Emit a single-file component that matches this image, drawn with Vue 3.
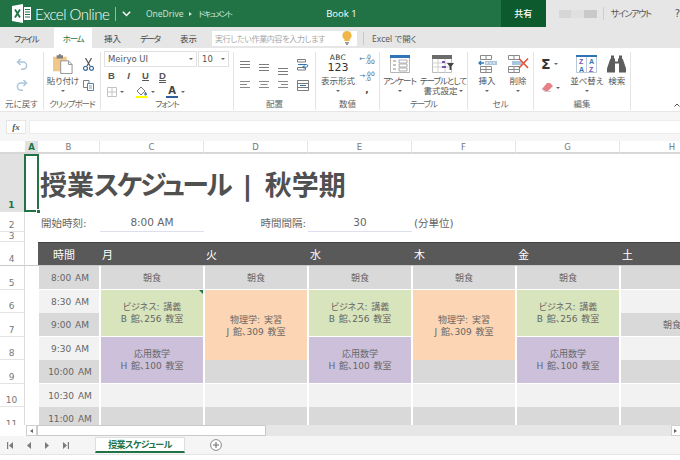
<script setup>
const days = ['月', '火', '水', '木', '金', '土'];
const columns = ['B', 'C', 'D', 'E', 'F', 'G'];

const biz = { text: ['ビジネス: 講義', 'B 館、256 教室'], cls: 'green span2' };
const math = { text: ['応用数学', 'H 館、100 教室'], cls: 'purple span2' };
const lab = { text: ['物理学: 実習', 'J 館、309 教室'], cls: 'peach span4' };
const blank = { text: [], cls: 'pale open' };
const dark = { text: [], cls: 'grey' };
const darkOpen = { text: [], cls: 'grey open' };
const meal = { text: ['朝食'], cls: 'grey' };

const rows = [
    { n: 5, time: '8:00 AM', timeCls: 'grey', cells: [meal, meal, meal, meal, meal, dark] },
    { n: 6, time: '8:30 AM', timeCls: 'pale open', cells: [biz, lab, biz, lab, biz, blank] },
    { n: 7, time: '9:00 AM', timeCls: 'grey', cells: [meal] },
    { n: 8, time: '9:30 AM', timeCls: 'pale open', cells: [math, math, math, blank] },
    { n: 9, time: '10:00 AM', timeCls: 'grey', cells: [dark] },
    { n: 10, time: '10:30 AM', timeCls: 'pale open', cells: [blank, blank, blank, blank, blank, blank] },
    { n: 11, time: '11:00 AM', timeCls: 'grey open', cells: [darkOpen, darkOpen, darkOpen, darkOpen, darkOpen, darkOpen] },
];

const vAligns = ['v1', 'v2', 'v3'];
const hAligns = [
    [[0, 10], [0, 7], [0, 10]],
    [[0, 10], [1.5, 7], [0, 10]],
    [[0, 10], [3, 7], [0, 10]],
];
</script>

<template>
    <div class="app">
        <header class="topbar">
            <div class="brand">
                <svg class="logo" width="20" height="19" viewBox="0 0 20 19">
                    <path d="M0 2 11 0v19L0 17z" fill="#fff" />
                    <path d="M12 3h7v13h-7z" fill="#fff" />
                    <path d="M13 5.500h5M13 8h5M13 10.500h5M13 13h5" stroke="#217346" stroke-width="1" />
                    <path d="M3 5.500 8 13.500M8 5.500 3 13.500" stroke="#217346" stroke-width="1.800" />
                </svg>
                <span class="product">Excel Online</span>
                <i class="bar-sep"></i>
                <svg width="9" height="6" viewBox="0 0 9 6"><path d="M.8.8 4.500 4.500 8.200.8" fill="none" stroke="#fff" stroke-width="1.500" /></svg>
                <span class="crumb first">OneDrive</span>
                <span class="crumb-arrow"></span>
                <span class="crumb kana">ドキュメント</span>
                <span class="book">Book 1</span>
                <span class="share">共有</span>
            </div>
            <div class="account">
                <span class="blur-name"><i></i><i></i><i></i></span>
                <i class="acc-sep"></i>
                <span class="signout kana">サインアウト</span>
                <span class="help">?</span>
            </div>
        </header>

        <nav class="tabs">
            <span class="tab t-file kana">ファイル</span>
            <span class="tab t-home kana">ホーム</span>
            <span class="tab t-ins">挿入</span>
            <span class="tab t-data kana">データ</span>
            <span class="tab t-view">表示</span>
            <div class="tell">
                <span>実行したい作業内容を入力します</span>
                <svg width="10" height="14" viewBox="0 0 10 14">
                    <path d="M5 0a4.600 4.600 0 0 0-2.600 8.400V10h5.200V8.400A4.600 4.600 0 0 0 5 0z" fill="#f0b64a" />
                    <path d="M3 11h4v1.400H3zM4 12.600h2V14H4z" fill="#9a9a9a" />
                </svg>
            </div>
            <i class="tab-sep"></i>
            <span class="tab open-in">Excel で開く</span>
        </nav>

        <section class="ribbon">
            <div class="group g-undo">
                <div class="body stack">
                    <svg width="12" height="12" viewBox="0 0 12 12"><path d="M4.500 1 1.500 4l3 3M2 4h5a3.600 3.600 0 0 1 0 7.200H5" fill="none" stroke="#a9c6dd" stroke-width="1.500" /></svg>
                    <svg width="12" height="12" viewBox="0 0 12 12"><path d="M7.500 1l3 3-3 3M10 4H5a3.600 3.600 0 0 0 0 7.200h2" fill="none" stroke="#a9c6dd" stroke-width="1.500" /></svg>
                </div>
                <div class="label">元に戻す</div>
            </div>

            <div class="group g-clip">
                <div class="body">
                    <div class="big w-paste">
                        <svg width="22" height="20" viewBox="0 0 22 22">
                            <path d="M0 3h15v16H0z" fill="#f0c98a" />
                            <path d="M4 1.500h2.500V0h2v1.500H11V5H4z" fill="#7f7f7f" />
                            <path d="M8.500 7.500H17l4 4v10H8.500z" fill="#fff" stroke="#8c8c8c" />
                            <path d="M17 7.500v4h4" fill="none" stroke="#8c8c8c" />
                        </svg>
                        <span class="cap">貼り付け</span>
                        <i class="caret"></i>
                    </div>
                    <div class="small-col">
                        <svg width="11" height="13" viewBox="0 0 11 13">
                            <path d="M2.500 0 7 8M8.500 0 4 8" stroke="#555" stroke-width="1.200" />
                            <circle cx="2.500" cy="10.300" r="2" fill="none" stroke="#3e6f9e" stroke-width="1.200" />
                            <circle cx="8.500" cy="10.300" r="2" fill="none" stroke="#3e6f9e" stroke-width="1.200" />
                        </svg>
                        <svg width="11" height="11" viewBox="0 0 11 11">
                            <path d="M.5.500h5.500v7H.5z" fill="#fff" stroke="#7f7f7f" />
                            <path d="M4.500 3.500h6v7h-6z" fill="#fff" stroke="#5a7fa3" />
                            <path d="M6 6h3M6 8h3" stroke="#5a7fa3" stroke-width=".8" />
                        </svg>
                    </div>
                </div>
                <div class="label kana-s">クリップボード</div>
            </div>

            <div class="group g-font">
                <div class="body col">
                    <div class="font-row">
                        <div class="combo c-name"><span>Meiryo UI</span><i class="caret"></i></div>
                        <div class="combo c-size"><span>10</span><i class="caret"></i></div>
                    </div>
                    <div class="style-row">
                        <b class="st">B</b>
                        <i class="st">I</i>
                        <u class="st">U</u>
                        <span class="st dbl">D</span>
                    </div>
                    <div class="fill-row">
                        <span class="tool">
                            <svg width="10" height="10" viewBox="0 0 10 10"><path d="M.5.500h9v9h-9zM5 .5v9M.5 5h9" fill="none" stroke="#c4c4c4" /></svg>
                            <i class="caret"></i>
                        </span>
                        <span class="tool">
                            <svg width="13" height="12" viewBox="0 0 13 12">
                                <path d="M2 5 6 1l4 4-4 4z" fill="#fff" stroke="#777" />
                                <path d="M10.500 5.500c1 1.400 1.500 2 1.500 2.700a1.400 1.400 0 0 1-2.800 0c0-.7.500-1.300 1.300-2.700z" fill="#4c7fb5" />
                                <path d="M1 10h11v2H1z" fill="#ffff00" />
                            </svg>
                            <i class="caret"></i>
                        </span>
                        <span class="tool">
                            <span class="font-color">A</span>
                            <i class="caret"></i>
                        </span>
                    </div>
                </div>
                <div class="label kana-s">フォント</div>
            </div>

            <div class="group g-align">
                <div class="body align-grid">
                    <svg v-for="a in vAligns" :key="a" :class="a" width="10" height="7" viewBox="0 0 10 7">
                        <path d="M0 .5h10M0 3.500h10M0 6.500h10" stroke="#7b7b7b" />
                    </svg>
                    <svg width="12" height="12" viewBox="0 0 12 12">
                        <path d="M.5.500h8v2.500h-8zM.5 8.500h8V11h-8z" fill="#fff" stroke="#7b7b7b" />
                        <path d="M1 5.500h8.500a1.200 1.200 0 0 1 0 2.500H6" fill="none" stroke="#2f75b5" />
                        <path d="M7.500 6.500 5.500 8l2 1.500" fill="none" stroke="#2f75b5" />
                    </svg>
                    <svg v-for="(a, k) in hAligns" :key="k" width="10" height="8" viewBox="0 0 10 8">
                        <path v-for="(l, i) in a" :key="i" :d="`M${l[0]} ${i * 3 + .5}h${l[1]}`" stroke="#8a8a8a" />
                    </svg>
                    <svg class="merge" width="12" height="11" viewBox="0 0 12 11">
                        <path d="M.5.500h11v10H.5zM.5 3.500h11M.5 7.500h11" fill="none" stroke="#7b7b7b" />
                        <path d="M3 5.500h6" stroke="#2f75b5" />
                    </svg>
                </div>
                <div class="label">配置</div>
            </div>

            <div class="group g-num">
                <div class="body">
                    <div class="big w-numfmt">
                        <span class="abc"><span>ABC</span><span class="n123">123</span></span>
                        <span class="cap">表示形式</span>
                        <i class="caret"></i>
                    </div>
                    <div class="dec-col">
                        <span class="dec"><span class="arrow-l">←</span><span class="dec-txt">.0<br>.00</span></span>
                        <span class="dec"><span class="arrow-r">→</span><span class="dec-txt">.00<br>.0</span></span>
                        <b class="comma">,</b>
                    </div>
                </div>
                <div class="label">数値</div>
            </div>

            <div class="group g-table">
                <div class="body">
                    <div class="big w-survey">
                        <svg width="20" height="18" viewBox="0 0 20 18">
                            <path d="M.5.500h19v17H.5z" fill="#fff" stroke="#b5b5b5" />
                            <path d="M0 0h20v3H0z" fill="#2f75b5" />
                            <path d="M3 6h3M3 10h3M3 14h3" stroke="#8a8a8a" />
                            <path d="M9 5h8v3H9zM9 9h8v3H9zM9 13h8v3H9z" fill="#fff" stroke="#9a9a9a" stroke-width=".8" />
                        </svg>
                        <span class="cap kana-s">アンケート</span>
                        <i class="caret"></i>
                    </div>
                    <div class="big w-format">
                        <svg width="22" height="18" viewBox="0 0 22 18">
                            <path d="M.5.500h19v17H.5z" fill="#fff" stroke="#bdbdbd" />
                            <path d="M0 0h20v4H0z" fill="#6b6b6b" />
                            <path d="M0 8h20M0 12h20M6 4v14M13 4v14" stroke="#cfcfcf" />
                            <path d="M10 7h3M10 12h4" stroke="#7b4fb0" stroke-width="1.800" />
                            <path d="M15 8h7l-2.600 3.500V15h-1.800v-3.500z" fill="#444" />
                        </svg>
                        <span class="cap two"><span class="kana-s">テーブルとして</span><br>書式設定<i class="caret inline"></i></span>
                    </div>
                </div>
                <div class="label kana-s">テーブル</div>
            </div>

            <div class="group g-cells">
                <div class="body">
                    <div class="big w-cell">
                        <svg width="19" height="18" viewBox="0 0 19 18">
                            <path d="M2.500.500h11v4h-11zM2.500 11.500h11v6h-11zM8 .5v4M8 11.500v6M2.500 14.500h11" fill="none" stroke="#8a8a8a" />
                            <path d="M1 8h5M3 6 1 8l2 2" fill="none" stroke="#2f75b5" stroke-width="1.300" />
                            <path d="M7 6h12v4H7z" fill="#a9c6dd" />
                            <path d="M8 8h2M11.500 8h2M15 8h2" stroke="#fff" />
                        </svg>
                        <span class="cap">挿入</span>
                        <i class="caret"></i>
                    </div>
                    <div class="big w-cell">
                        <svg width="21" height="18" viewBox="0 0 21 18">
                            <path d="M.5.500h11v4H.5zM.5 11.500h11v6H.5zM6 .5v4M6 11.500v6M.5 14.500h11" fill="none" stroke="#8a8a8a" />
                            <path d="M4 6h10v4H4z" fill="#a9c6dd" />
                            <path d="M11 3.500 20 13M20 3.500 11 13" stroke="#e2543a" stroke-width="1.600" />
                        </svg>
                        <span class="cap">削除</span>
                        <i class="caret"></i>
                    </div>
                </div>
                <div class="label">セル</div>
            </div>

            <div class="group g-edit">
                <div class="body">
                    <div class="edit-col">
                        <span class="tool"><span class="sigma">Σ</span><i class="caret"></i></span>
                        <span class="tool">
                            <svg width="12" height="9" viewBox="0 0 12 9">
                                <path d="M6 0h3l3 3-5 5H4L1 6z" fill="#e8808a" />
                                <path d="M1 6l3 2.500h6" fill="none" stroke="#c9c9c9" />
                            </svg>
                            <i class="caret"></i>
                        </span>
                    </div>
                    <div class="big w-sort">
                        <svg width="21" height="18" viewBox="0 0 21 18">
                            <path d="M.5.500h20v17H.5zM10.500 2v16" fill="#fff" stroke="#b9c9d8" />
                            <path d="M0 0h21v2H0z" fill="#2f75b5" />
                            <text x="3" y="9" class="az pu">Z</text>
                            <text x="3" y="16.500" class="az bl">A</text>
                            <text x="13" y="9" class="az bl">A</text>
                            <text x="13" y="16.500" class="az pu">Z</text>
                        </svg>
                        <span class="cap">並べ替え</span>
                        <i class="caret"></i>
                    </div>
                    <div class="big w-find">
                        <svg width="19" height="17" viewBox="0 0 19 17">
                            <path d="M4 0h3v3h1v3h3V3h1V0h3v3l1 1 3 9v4h-7V8H8v9H0v-4l3-9 1-1z" fill="#5c5c5c" />
                        </svg>
                        <span class="cap">検索</span>
                    </div>
                </div>
                <div class="label">編集</div>
            </div>

            <svg class="collapse" width="6" height="4" viewBox="0 0 6 4"><path d="M.5 3.500 3 1l2.500 2.500" fill="none" stroke="#555" /></svg>
        </section>

        <div class="formula">
            <span class="fx">fx</span>
            <div class="fx-input"></div>
        </div>

        <main class="sheet">
            <div class="corner"></div>
            <div class="colhead sel">A</div>
            <div v-for="c in [...columns, 'H']" :key="c" class="colhead" :class="{ last: c === 'H' }">{{ c }}</div>

            <div class="rowhead sel">1</div>
            <div class="a1"></div>
            <div class="title-cell">授業<span class="title-kana">スケジュール</span> | 秋学期</div>

            <div class="rowhead">2</div>
            <div></div>
            <div class="param">開始時刻:</div>
            <div class="param value">8:00 AM</div>
            <div class="param right">時間間隔:</div>
            <div class="param value">30</div>
            <div class="param unit">(分単位)</div>

            <div class="rowhead r3">3</div>
            <div class="fullrow"></div>

            <div class="rowhead froze">4</div>
            <div class="froze"></div>
            <div class="dayhead center froze">時間</div>
            <div v-for="d in days" :key="d" class="dayhead froze">{{ d }}</div>

            <template v-for="r in rows" :key="r.n">
                <div class="rowhead">{{ r.n }}</div>
                <div></div>
                <div class="cell time" :class="r.timeCls">{{ r.time }}</div>
                <div v-for="(c, i) in r.cells" :key="i" class="cell" :class="c.cls">
                    <span v-for="t in c.text" :key="t">{{ t }}</span>
                    <i v-if="r.n === 6 && i === 0" class="note"></i>
                </div>
            </template>
        </main>

        <div class="hscroll">
            <span class="sb-btn left"><i></i></span>
            <span class="sb-thumb"></span>
            <span class="sb-track"></span>
            <span class="sb-btn right"><i></i></span>
        </div>

        <div class="sheet-tabs">
            <div class="nav-btns">
                <svg width="6" height="7" viewBox="0 0 6 7"><path d="M0 0h1.200v7H0zM6 0v7L2 3.500z" fill="#7b7b7b" /></svg>
                <svg width="4" height="7" viewBox="0 0 4 7"><path d="M4 0v7L0 3.500z" fill="#7b7b7b" /></svg>
                <svg width="4" height="7" viewBox="0 0 4 7"><path d="M0 0v7l4-3.500z" fill="#7b7b7b" /></svg>
                <svg width="6" height="7" viewBox="0 0 6 7"><path d="M0 0v7l4-3.500zM4.800 0H6v7H4.800z" fill="#7b7b7b" /></svg>
            </div>
            <div class="sheet-tab"><span>授業スケジュール</span></div>
            <svg class="add" width="12" height="12" viewBox="0 0 12 12">
                <circle cx="6" cy="6" r="5.400" fill="#fff" stroke="#8a8a8a" />
                <path d="M6 3v6M3 6h6" stroke="#666" />
            </svg>
        </div>

        <footer class="status"></footer>
    </div>
</template>

<style scoped>
.app{width:680px;height:460px;overflow:hidden;display:flex;flex-direction:column;background:#fff;color:#444;font-family:"DejaVu Sans","Noto Sans CJK JP",sans-serif;font-size:9px;font-feature-settings:"palt"}
.kana{letter-spacing:-1.300px}
.kana-s{letter-spacing:-1px}

.topbar{height:28px;flex:none;display:flex;background:#e6e6e6}
.brand{width:548px;height:27px;display:flex;align-items:center;background:#217346;color:#fff;padding-left:12px;box-sizing:border-box}
.logo{margin-right:3px;flex:none}
.product{font-family:Lato,"Open Sans",sans-serif;font-weight:300;font-size:15px;letter-spacing:-.5px;width:80px;white-space:nowrap}
.bar-sep{width:1px;height:14px;background:#8fbaa3;margin-right:6px}
.crumb{font-family:"Open Sans","Noto Sans CJK JP",sans-serif;font-size:8.500px;color:#cfe6d9;white-space:nowrap}
.crumb.first{margin-left:15px}
.crumb-arrow{margin:0 6px;width:0;height:0;border-left:3px solid #cfe6d9;border-top:2.500px solid transparent;border-bottom:2.500px solid transparent}
.crumb.kana{font-size:8px}
.book{font-family:"Open Sans",sans-serif;font-size:9.500px;margin-left:auto;margin-right:144px}
.share{width:45px;height:100%;display:flex;align-items:center;justify-content:center;background:#0c5a2e;font-size:9px;font-weight:500}
.account{flex:1;display:flex;align-items:center;height:27px;padding-left:13px;color:#555;font-size:9px}
.blur-name{display:flex;width:38px;height:8px}
.blur-name i{background:#d6d6d6;flex:1}
.blur-name i:nth-child(2){background:#e0e0e0}
.blur-name i:nth-child(3){background:#c9c9c9}
.acc-sep{width:1px;height:13px;background:#cfcfcf;margin:0 7px 0 6px}
.signout{width:64px;white-space:nowrap}
.help{font-size:10px}

.tabs{height:20px;flex:none;display:flex;align-items:center;background:#e6e6e6;font-size:8.500px;color:#444}
.tab{white-space:nowrap}
.t-file{margin-left:14px;width:40px}
.t-home{width:38px;height:100%;background:#fff;color:#217346;display:flex;align-items:center;justify-content:center}
.t-ins{margin-left:12px;width:36px}
.t-data{width:40px}
.t-view{width:32px}
.tell{width:145px;height:15px;background:#fff;display:flex;align-items:center;justify-content:space-between;padding:0 5px 0 3px;box-sizing:border-box;color:#a6a6a6;font-size:8px;letter-spacing:-.3px}
.tab-sep{width:1px;height:13px;background:#c8c8c8;margin:0 8px 0 6px}
.open-in{color:#555;font-family:"Open Sans","Noto Sans CJK JP",sans-serif;font-size:8.500px}

.ribbon{position:relative;height:64px;flex:none;display:flex;box-sizing:border-box;padding:4px 0 2px;background:#fff;border-bottom:1px solid #e6e6e6}
.group{display:flex;flex-direction:column;border-right:1px solid #e4e4e4;box-sizing:border-box;height:58px}
.body{height:47px;display:flex}
.label{height:11px;line-height:11px;text-align:center;font-size:8.500px;color:#666;white-space:nowrap}
.g-undo{width:44px}
.g-clip{width:57px}
.g-font{width:133px}
.g-align{width:82px}
.g-num{width:64px}
.g-table{width:88px}
.g-cells{width:66px}
.g-edit{width:97px}
.stack{flex-direction:column;align-items:center;gap:9px;padding-top:6px;box-sizing:border-box}
.col{flex-direction:column}
.big{display:flex;flex-direction:column;align-items:center;padding-top:2px;box-sizing:border-box}
.big svg{height:20px}
.cap{font-size:8.500px;line-height:10px;color:#555;margin-top:2px;white-space:nowrap;text-align:center}
.big > .caret{margin-top:4px}
.caret{display:inline-block;width:0;height:0;border-top:2.500px solid #666;border-left:2.500px solid transparent;border-right:2.500px solid transparent}
.caret.inline{margin-left:1px;vertical-align:2px}
.w-paste{width:38px}
.small-col{display:flex;flex-direction:column;gap:9px;padding-top:6px;align-items:center;width:12px}
.font-row{display:flex;gap:1px;margin:-1px 0 0 3px}
.combo{height:16px;display:flex;align-items:center;justify-content:space-between;padding:0 3px;border:1px solid #e1e1e1;box-sizing:border-box;color:#555;font-size:8.500px}
.c-name{width:93px}
.c-size{width:31px}
.style-row{display:flex;padding-left:2px;height:14px;align-items:center;margin-top:1px}
.st{width:17px;text-align:center;font-size:9.500px;font-weight:700;color:#555;font-style:normal;font-family:"Liberation Sans",sans-serif}
i.st{font-style:italic}
.dbl{text-decoration:underline double}
.fill-row{display:flex;padding:4px 0 0 6px;gap:11px;align-items:center}
.tool{display:flex;align-items:center;gap:3px}
.font-color{width:12px;border-bottom:2px solid #2f5f9e;text-align:center;font-size:10px;line-height:10px;font-weight:700;color:#444}
.align-grid{display:grid;grid-template-columns:repeat(4,19px);grid-template-rows:22px 21px;padding:7px 0 0 6px;box-sizing:border-box;align-items:start;height:47px}
.v1{margin-top:2px}
.v2{margin-top:5px}
.v3{margin-top:9px}
.merge{margin-top:-1px}
.w-numfmt{width:44px}
.abc{display:flex;flex-direction:column;align-items:center;height:20px;font-size:7.500px;line-height:8px;color:#333;letter-spacing:.3px}
.n123{font-size:11px;line-height:11px;letter-spacing:0}
.dec-col{display:flex;flex-direction:column;align-items:center;width:14px;padding-top:1px;gap:5px}
.dec{display:flex;align-items:center;height:12px}
.dec-txt{font-size:6px;line-height:5.500px;color:#555}
.arrow-l,.arrow-r{font-size:7px;color:#2f75b5}
.comma{font-size:9px;line-height:6px;color:#444}
.w-survey{width:39px}
.w-format{width:48px}
.w-cell{width:30px;margin-left:1px}
.g-cells .body{padding-left:3px;box-sizing:border-box}
.edit-col{display:flex;flex-direction:column;gap:12px;padding:5px 0 0 7px;width:24px}
.sigma{font-size:14px;line-height:14px;color:#333;font-weight:700}
.w-sort{width:36px;margin-left:8px}
.w-find{width:30px}
.az{font-size:7px;font-weight:700;font-family:"Liberation Sans",sans-serif}
.pu{fill:#7b4fb0}
.bl{fill:#2f75b5}
.collapse{position:absolute;right:0;bottom:4px}

.formula{height:29px;flex:none;display:flex;align-items:flex-start;background:#f6f6f6;padding-top:8px;box-sizing:border-box;gap:3px}
.fx{margin-left:6px;width:20px;height:14px;background:#fff;border:1px solid #e6e6e6;box-sizing:border-box;display:flex;align-items:center;justify-content:center;font-family:"Liberation Serif",serif;font-style:italic;font-size:9px;font-weight:700;color:#555}
.fx-input{flex:1;height:14px;background:#fff;border-top:1px solid #ececec;border-bottom:1px solid #ececec;border-left:1px solid #ececec;box-sizing:border-box}

.sheet{height:284px;flex:none;overflow:hidden;display:grid;grid-template-columns:25px 13px 62px repeat(6,104px);grid-template-rows:13px 58px 20px 10px 24px 24px 23px 24px 23px 24px 23px 24px;background:#fff}
.corner{border-bottom:2px solid #d8d8d8;box-sizing:border-box}
.colhead{display:flex;align-items:center;justify-content:center;border-bottom:2px solid #d8d8d8;border-right:1px solid #e6e6e6;box-sizing:border-box;font-size:8.500px;color:#777}
.colhead.last{border-right:0}
.colhead.sel{background:#e1e1e1;color:#217346;font-weight:700;border-right:0}
.rowhead{display:flex;align-items:flex-end;justify-content:center;border-bottom:1px solid #e4e4e4;border-right:1px solid #dcdcdc;box-sizing:border-box;font-size:9px;line-height:12px;color:#777;padding-right:1px;overflow:hidden}
.rowhead.sel{background:#e1e1e1;color:#217346;font-weight:700}
.r3{line-height:9px}
.a1{position:relative;border:2px solid #217346;box-sizing:border-box;margin-left:-1px;margin-right:-1px;z-index:2}
.a1::after{content:"";position:absolute;right:-4px;bottom:-4px;width:5px;height:5px;background:#217346;border:1px solid #fff;box-sizing:border-box}
.title-cell{grid-column:3 / span 7;display:flex;align-items:center;padding-left:2px;font-size:27px;font-weight:700;color:#505050;white-space:pre;word-spacing:3px}
.title-kana{letter-spacing:-2.500px}
.param{display:flex;align-items:flex-end;font-size:10.500px;line-height:15px;color:#666;white-space:nowrap;padding-left:3px;padding-bottom:1px;box-sizing:border-box}
.value{justify-content:center;border-bottom:1px solid #dedfee;padding-left:0}
.right{justify-content:flex-end;padding-right:2px}
.unit{grid-column:span 3;padding-left:2px}
.fullrow{grid-column:2 / span 8}
.froze{border-bottom:1px solid #c9c9c9;box-sizing:border-box}
.dayhead{background:#595959;color:#fff;font-size:11px;display:flex;align-items:center;padding-left:2px;border-top:1px solid #444}
.dayhead.center{justify-content:center;padding:0 10px 0 0}
.cell{position:relative;display:flex;flex-direction:column;align-items:center;justify-content:center;font-size:9px;line-height:12px;color:#666;white-space:nowrap;word-spacing:1px;box-sizing:border-box;border-left:1px solid #fff;border-right:1px solid #fff;border-bottom:1px solid #fff}
.time{padding-left:2px}
.open{border-bottom:0}
.grey{background:#d9d9d9}
.pale{background:#f2f2f2}
.green{background:#d8e4bc}
.purple{background:#ccc0da}
.peach{background:#fcd5b4;justify-content:flex-start;padding-top:24px}
.peach::after{content:"";position:absolute;left:0;right:0;bottom:0;height:23px;background:#d9d9d9}
.span2{grid-row:span 2}
.span4{grid-row:span 4}
.note{position:absolute;right:0;top:0;width:0;height:0;border-top:4px solid #217346;border-left:4px solid transparent}

.hscroll{height:11px;flex:none;display:flex;padding-left:26px;background:#fff;box-sizing:border-box}
.sb-btn{width:11px;height:11px;display:flex;align-items:center;justify-content:center;background:#fff;border:1px solid #d0d0d0;box-sizing:border-box}
.sb-btn i{width:0;height:0;border-top:2.500px solid transparent;border-bottom:2.500px solid transparent}
.sb-btn.left i{border-right:3px solid #666}
.sb-btn.right i{border-left:3px solid #666}
.sb-btn.right{width:9px;border-right:0}
.sb-thumb{width:229px;background:#fff;border:1px solid #c9c9c9;box-sizing:border-box}
.sb-track{flex:1;background:#e6e6e6}

.sheet-tabs{height:18px;flex:none;display:flex;align-items:center;background:#f5f5f5}
.nav-btns{display:flex;align-items:center;gap:14px;padding-left:7px;width:95px;box-sizing:border-box}
.sheet-tab{width:90px;height:16px;display:flex;align-items:center;justify-content:center;background:#fff;border:1px solid #dedede;border-bottom:2px solid #217346;box-sizing:border-box;color:#217346;font-size:9px;font-weight:700}
.sheet-tab span{letter-spacing:-.6px}
.add{margin-left:25px}

.status{height:6px;flex:none;background:#fff;border-top:1px solid #e4e4e4;box-sizing:border-box}
</style>

<style>
html,body{margin:0;background:#fff}
</style>
